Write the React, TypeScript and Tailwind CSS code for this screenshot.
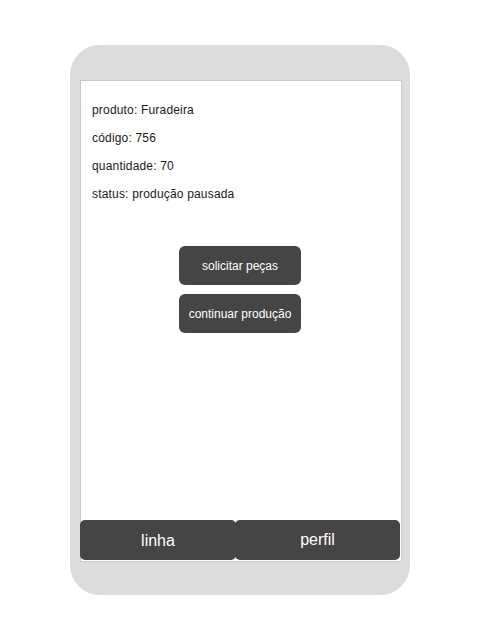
import React from 'react';

const info = [
  { label: 'produto', value: 'Furadeira' },
  { label: 'código', value: '756' },
  { label: 'quantidade', value: '70' },
  { label: 'status', value: 'produção pausada' },
];

export default function App() {
  return (
    <div className="w-[480px] h-[640px] bg-white flex justify-center pt-[45px] font-['Liberation_Sans',Arial,sans-serif]">
      <div className="w-[340px] h-[550px] bg-[#dcdcdc] rounded-[30px] pt-[35px] pl-[10px]">
        <div className="w-[322px] h-[482px] bg-white border border-[#c8c8c8] flex flex-col pb-px">
          {/* dados do produto */}
          <div className="flex flex-col gap-3 pt-[21px] pl-[11px] text-[12px] leading-4 tracking-[0.18px] text-[#1a1a1a]">
            {info.map((item) => (
              <p key={item.label}>
                {item.label}: {item.value}
              </p>
            ))}
          </div>

          <div className="flex flex-col items-center gap-[9px] mt-[44px] pr-[2px]">
            <button className="w-[122px] h-[39px] rounded-md bg-[#454545] text-white text-[12px]">
              solicitar peças
            </button>
            <button className="w-[122px] h-[39px] rounded-md bg-[#454545] text-white text-[12px]">
              continuar produção
            </button>
          </div>

          <div className="mt-auto flex -ml-px">
            <button className="w-[156px] h-[40px] rounded-[5px] bg-[#454545] text-white text-[16px] pt-px">
              linha
            </button>
            <button className="w-[165px] h-[40px] rounded-[5px] bg-[#454545] text-white text-[16px] -ml-px pb-px">
              perfil
            </button>
          </div>
        </div>
      </div>
    </div>
  );
}
